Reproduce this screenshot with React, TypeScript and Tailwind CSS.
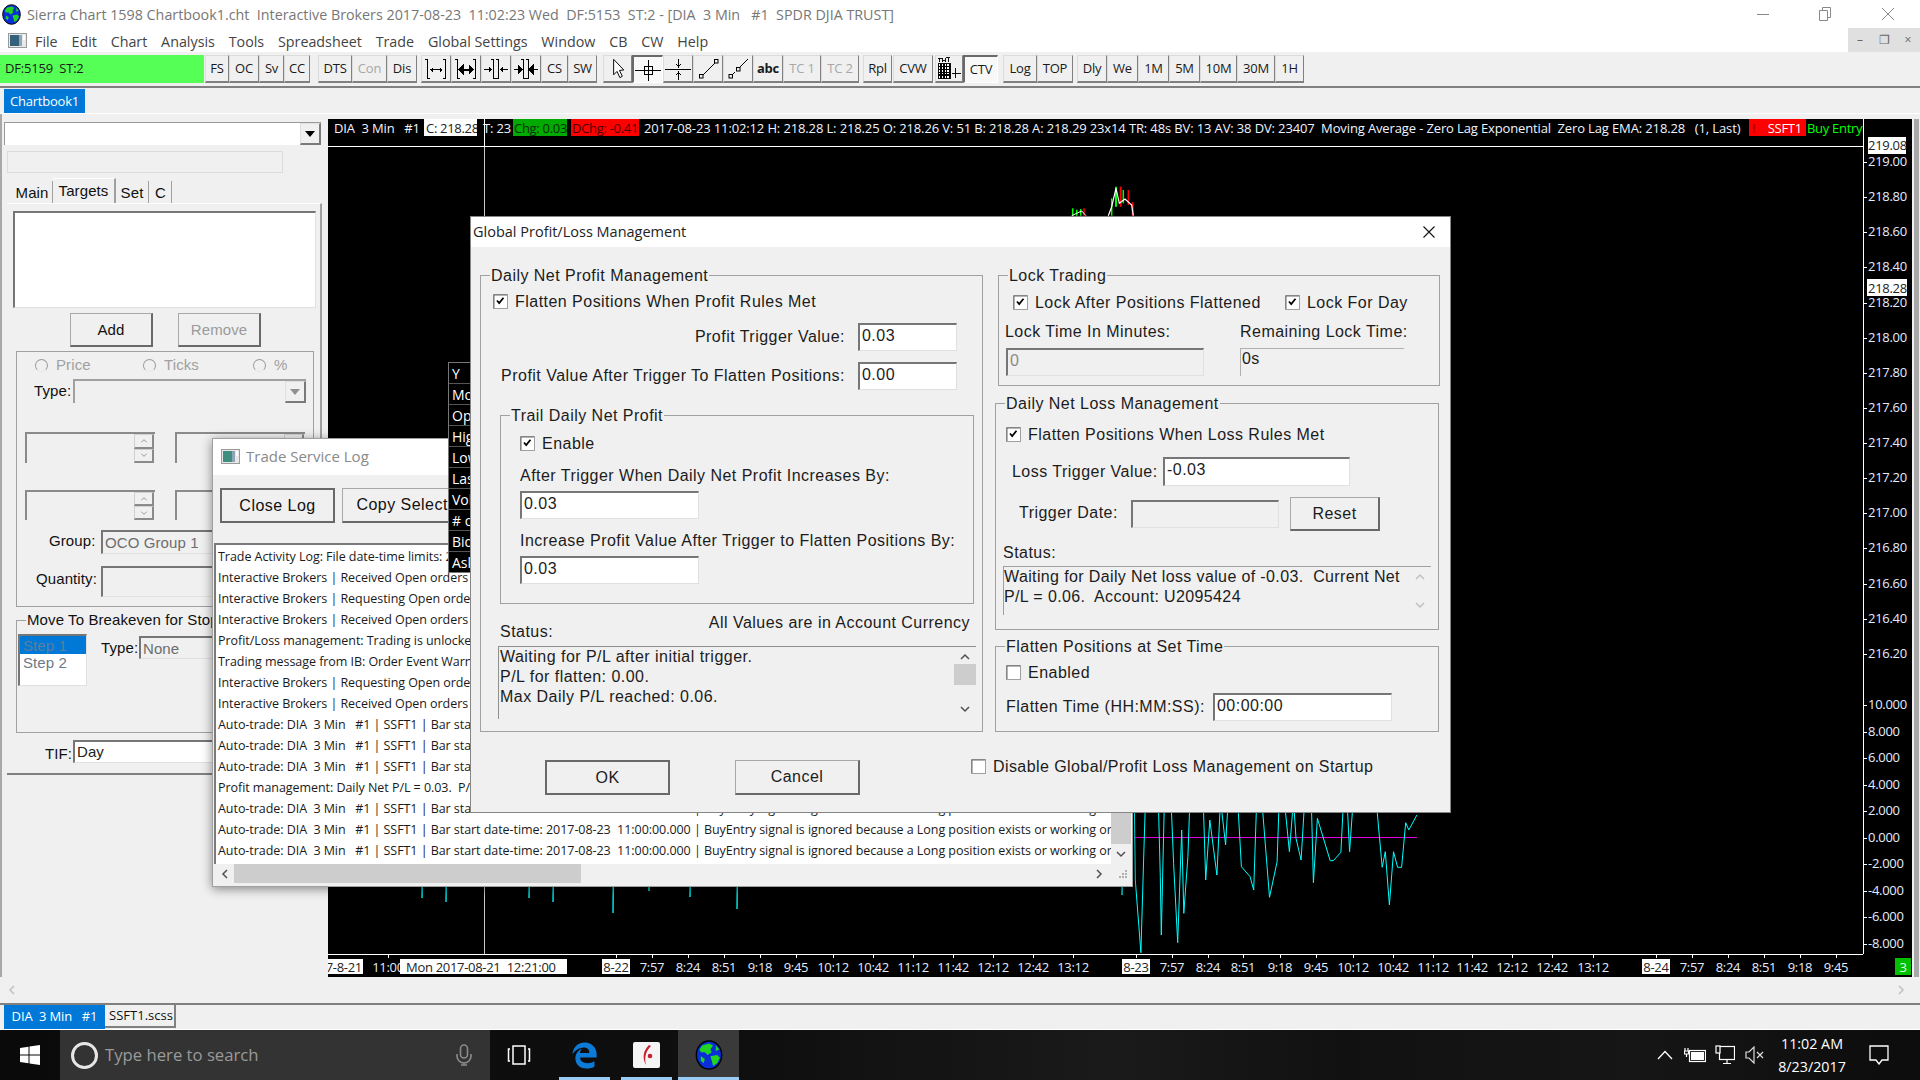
import React from "react";
import { FaEdgeLegacy } from "react-icons/fa";

const ui = "font-['Open_Sans',sans-serif]";
const ms = "font-['Liberation_Sans',Arial,sans-serif] text-[16px] tracking-[0.47px]";
const lp = "font-['Liberation_Sans',Arial,sans-serif] text-[15px] tracking-[0.1px]";

const Chev = ({ d, c = "#606060", s = 12 }: { d: "u" | "d" | "l" | "r"; c?: string; s?: number }) => {
  const p = { u: "2,8 6,4 10,8", d: "2,4 6,8 10,4", l: "8,2 4,6 8,10", r: "4,2 8,6 4,10" }[d];
  return (
    <svg width={s} height={s} viewBox="0 0 12 12" className="shrink-0">
      <polyline points={p} fill="none" stroke={c} strokeWidth="1.5" />
    </svg>
  );
};

const Globe = ({ w, h }: { w: number; h: number }) => (
  <svg width={w} height={h} viewBox="0 0 20 22" className="shrink-0">
    <ellipse cx="10" cy="11" rx="9.3" ry="10.3" fill="#0a2fd8" stroke="#000" strokeWidth="1" />
    <path d="M5 4 L10 2.5 L13 4 L11 7 L12 9 L9 11 L7 9 L4 9 L3 7 Z" fill="#22d422" />
    <path d="M11 12 L16 11 L18 13 L16 17 L13 19 L12 15 Z" fill="#22d422" />
    <path d="M15 4 L17.5 7 L15 8 Z" fill="#22d422" />
    <path d="M4 12 L7 14 L6 17 L4 15 Z" fill="#22d422" />
  </svg>
);

const DocIcon = ({ muted }: { muted?: boolean }) => (
  <svg width="19" height="15" viewBox="0 0 19 15" className="shrink-0">
    <rect x="0.5" y="0.5" width="18" height="14" fill="#e8e8e8" stroke="#9a9a9a" />
    <rect x="2" y="2" width="9" height="11" fill={muted ? "#3f8f80" : "#33607a"} />
    <rect x="11" y="2" width="3" height="11" fill="#8fa5b5" />
    <rect x="15" y="2" width="2" height="5" fill="#fff" />
  </svg>
);

const I = ({ children }: { children: React.ReactNode }) => (
  <svg width="28" height="26" viewBox="0 0 28 26" fill="none" stroke="#000" strokeWidth="1" shapeRendering="crispEdges">
    {children}
  </svg>
);

const Bars = ({ a, b }: { a: number; b: number }) => (
  <>
    <path d={`M${a}.5 3V23M${b}.5 3V23M${a - 2} 3.5H${a + 1}M${a} 22.5H${a + 3}M${b - 2} 3.5H${b + 1}M${b - 2} 22.5H${b + 1}`} />
  </>
);

const icons: Record<string, React.ReactNode> = {
  i1: (
    <I>
      <Bars a={5} b={23} />
      <path d="M8 13.5H20M10 11.5V15.5M9 12.5V14.5M18 11.5V15.5M19 12.5V14.5" />
    </I>
  ),
  i2: (
    <I>
      <Bars a={5} b={23} />
      <path d="M7 13.5H21" strokeWidth="2" />
      <path d="M7 13.5L11 9.5V17.5ZM21 13.5L17 9.5V17.5Z" fill="#000" />
    </I>
  ),
  i3: (
    <I>
      <Bars a={11} b={16} />
      <path d="M2 13.5H9M7 11.5L9 13.5L7 15.5M19 13.5H26M21 11.5L19 13.5L21 15.5" />
    </I>
  ),
  i4: (
    <I>
      <Bars a={11} b={16} />
      <path d="M2 13.5H6M19 13.5H26" />
      <path d="M10 13.5L6 9.5V17.5ZM17 13.5L21 9.5V17.5Z" fill="#000" />
    </I>
  ),
  arrow: (
    <svg width="28" height="26" viewBox="0 0 28 26" fill="#fff" stroke="#000">
      <path d="M10 3 V19 L13.5 15.5 L16.5 22 L19 20.5 L16 14.5 L20.5 14 Z" />
    </svg>
  ),
  cross: (
    <I>
      <path d="M1 13.5H27M14.5 3V24" />
      <rect x="10.5" y="9.5" width="8" height="8" />
    </I>
  ),
  mid: (
    <I>
      <path d="M1 13.5H27M14.5 3V10M12.5 8L14.5 11L16.5 8M14.5 17V24M12.5 19L14.5 16L16.5 19" />
    </I>
  ),
  l1: (
    <svg width="28" height="26" viewBox="0 0 28 26" fill="none" stroke="#000">
      <path d="M9 19L21 7" />
      <rect x="5.5" y="18.5" width="3.5" height="3.5" />
      <rect x="20.5" y="3.5" width="3.5" height="3.5" />
    </svg>
  ),
  l2: (
    <svg width="28" height="26" viewBox="0 0 28 26" fill="none" stroke="#000">
      <path d="M8 19L11 16M16 11L24 3" />
      <rect x="5" y="18.5" width="3.5" height="3.5" />
      <rect x="12.5" y="11.5" width="3.5" height="3.5" />
    </svg>
  ),
  grid: (
    <svg width="28" height="26" viewBox="0 0 28 26" fill="none" stroke="#000" shapeRendering="crispEdges">
      <path d="M2 1.5H6M4 1V5M7 1V5L8.5 3.5L10 5V1M11 1H15M13 1V5" />
      <rect x="2.5" y="7.5" width="13" height="16" fill="#fff" />
      <path d="M2 10.5H16M2 13.5H16M2 16.5H16M2 19.5H16M5.5 8V24M8.5 8V24M11.5 8V24M14.5 8V24" strokeWidth="1.4" />
      <path d="M17 17.5H27M21.5 12V23" />
    </svg>
  ),
};

type T = { t?: string; ic?: string; w: number; ml?: number; off?: boolean; on?: boolean; bold?: boolean };
const tools: T[] = [
  { t: "FS", w: 24, ml: 1 }, { t: "OC", w: 30 }, { t: "Sv", w: 25 }, { t: "CC", w: 26 },
  { t: "DTS", w: 34, ml: 8 }, { t: "Con", w: 35, off: true }, { t: "Dis", w: 30 },
  { ic: "i1", w: 30, ml: 4 }, { ic: "i2", w: 30 }, { ic: "i3", w: 30 }, { ic: "i4", w: 30 },
  { t: "CS", w: 27 }, { t: "SW", w: 29 },
  { ic: "arrow", w: 29, ml: 6 }, { ic: "cross", w: 31, on: true }, { ic: "mid", w: 30 }, { ic: "l1", w: 30 }, { ic: "l2", w: 30 },
  { t: "abc", w: 30, bold: true }, { t: "TC 1", w: 38, off: true }, { t: "TC 2", w: 38, off: true },
  { t: "Rpl", w: 29, ml: 4 }, { t: "CVW", w: 40, ml: 1 }, { ic: "grid", w: 28, ml: 2 }, { t: "CTV", w: 35, on: true },
  { t: "Log", w: 34, ml: 5 }, { t: "TOP", w: 36 }, { t: "Dly", w: 30, ml: 4 }, { t: "We", w: 31 }, { t: "1M", w: 31 },
  { t: "5M", w: 31 }, { t: "10M", w: 37 }, { t: "30M", w: 38 }, { t: "1H", w: 29 },
];

const menus = ["File", "Edit", "Chart", "Analysis", "Tools", "Spreadsheet", "Trade", "Global Settings", "Window", "CB", "CW", "Help"];

const Sunken = ({ className = "", children, white = true }: { className?: string; children?: React.ReactNode; white?: boolean }) => (
  <div
    className={`shrink-0 overflow-hidden whitespace-pre border-t-2 border-l-2 border-r border-b border-t-[#767676] border-l-[#767676] border-r-[#e0e0e0] border-b-[#e0e0e0] pl-[2px] leading-[22px] ${
      white ? "bg-white" : "bg-[#f0f0f0]"
    } ${className}`}
  >
    {children}
  </div>
);

const Btn = ({ className = "", children, def }: { className?: string; children: React.ReactNode; def?: boolean }) => (
  <div
    className={`flex shrink-0 items-center justify-center overflow-hidden whitespace-pre bg-[#f0f0f0] ${
      def
        ? "border-2 border-[#696969]"
        : "border-t border-l border-r-2 border-b-2 border-t-[#a8a8a8] border-l-[#a8a8a8] border-r-[#696969] border-b-[#696969]"
    } ${className}`}
  >
    {children}
  </div>
);

const Check = ({ on, label, className = "" }: { on?: boolean; label: string; className?: string }) => (
  <div className={`flex h-[16px] items-center whitespace-pre text-[#1c1c1c] ${className}`}>
    <svg width="15" height="15" viewBox="0 0 15 15" className="mr-[7px] shrink-0">
      <rect x="0.5" y="0.5" width="14" height="14" fill="#fff" stroke="#a0a0a0" />
      <path d="M1 1H14M1 1V14" stroke="#6a6a6a" strokeWidth="1" />
      {on && <path d="M4 6.5 L6.2 9 L10.5 3.8" fill="none" stroke="#000" strokeWidth="1.8" />}
    </svg>
    <span className="mt-[2px]">{label}</span>
  </div>
);

const Group = ({ legend, lx, className = "", children }: { legend: string; lx: number; className?: string; children: React.ReactNode }) => (
  <div className={`relative shrink-0 border border-[#a0a0a0] ${className}`}>
    <div
      className="absolute top-[-10px] h-[20px] whitespace-pre bg-[#f0f0f0] px-[1px] leading-[20px] text-[#1c1c1c]"
      style={{ left: lx }}
    >
      {legend}
    </div>
    {children}
  </div>
);

const Radio = ({ label, w, ml }: { label: string; w: number; ml: number }) => (
  <div className="flex h-[14px] items-center text-[#a0a0a0]" style={{ width: w, marginLeft: ml }}>
    <span className="mr-[8px] h-[13px] w-[13px] shrink-0 rounded-full border border-[#9a9a9a] border-b-[#e8e8e8] bg-[#f0f0f0]" />
    {label}
  </div>
);

const Spin = ({ h, w }: { h: number; w: number }) => (
  <div className="relative shrink-0 border-t-2 border-l-2 border-[#8a8a8a] bg-[#f0f0f0]" style={{ height: h, width: w }}>
    <div className="absolute right-[1px] top-0 flex h-full w-[20px] flex-col">
      <div className="flex flex-1 items-center justify-center border border-r-2 border-b-2 border-[#d0d0d0] border-r-[#8a8a8a] border-b-[#8a8a8a]">
        <Chev d="u" c="#9a9a9a" s={8} />
      </div>
      <div className="flex flex-1 items-center justify-center border border-r-2 border-b-2 border-[#d0d0d0] border-r-[#8a8a8a] border-b-[#8a8a8a]">
        <Chev d="d" c="#9a9a9a" s={8} />
      </div>
    </div>
  </div>
);

const DropBtn = ({ c = "#000" }: { c?: string }) => (
  <div className="flex h-full w-[21px] shrink-0 items-center justify-center border border-r-2 border-b-2 border-[#e0e0e0] border-r-[#7a7a7a] border-b-[#7a7a7a] bg-[#f0f0f0]">
    <svg width="10" height="6" viewBox="0 0 10 6">
      <path d="M0 0H10L5 6Z" fill={c} />
    </svg>
  </div>
);

const LeftPanel = () => (
  <div className={`flex w-[328px] shrink-0 flex-col border-l-2 border-[#a8a8a8] ${lp}`}>
    <div className="ml-[2px] mt-[8px] flex h-[23px] w-[317px] items-stretch justify-end border-t border-l border-[#9a9a9a] bg-white">
      <DropBtn />
    </div>
    <div className="ml-[5px] mt-[6px] h-[22px] w-[276px] border border-[#dcdcdc]" />
    <div className="ml-[10px] mt-[5px] flex h-[25px] items-end text-[#111]">
      <div className="flex h-[22px] w-[41px] items-center justify-center border-r border-[#a0a0a0] pt-[2px]">Main</div>
      <div className="flex h-[25px] w-[63px] items-center justify-center border-r-2 border-t border-[#a0a0a0] border-t-white">Targets</div>
      <div className="flex h-[22px] w-[33px] items-center justify-center border-r border-[#a0a0a0] pt-[2px]">Set</div>
      <div className="ml-[1px] flex h-[22px] w-[22px] items-center justify-center border-r border-[#a0a0a0] pt-[2px]">C</div>
    </div>
    <div className="ml-[5px] flex h-[572px] w-[315px] flex-col border-t border-white border-r-2 border-b-2 border-r-[#a0a0a0] border-b-[#808080]">
      <Sunken className="ml-[6px] mt-[7px] h-[97px] w-[303px]" />
      <div className="mt-[5px] flex h-[34px]">
        <Btn className="ml-[63px] h-[34px] w-[83px] pt-[1px] text-[#111]">Add</Btn>
        <Btn className="ml-[25px] h-[34px] w-[83px] pt-[1px] text-[#9a9a9a]">Remove</Btn>
      </div>
      <div className="ml-[9px] mt-[4px] h-[256px] w-[298px] shrink-0 border border-[#a0a0a0]">
        <div className="mt-[6px] flex">
          <Radio label="Price" w={108} ml={18} />
          <Radio label="Ticks" w={110} ml={0} />
          <Radio label="%" w={40} ml={0} />
        </div>
        <div className="mt-[7px] flex h-[24px] items-center">
          <span className="ml-[17px] w-[39px] text-[#111]">Type:</span>
          <div className="flex h-[24px] w-[233px] justify-end border-t-2 border-l-2 border-[#a0a0a0]">
            <DropBtn c="#909090" />
          </div>
        </div>
        <div className="ml-[8px] mt-[29px] flex gap-[20px]">
          <Spin h={31} w={130} />
          <Spin h={31} w={130} />
        </div>
        <div className="ml-[8px] mt-[27px] flex gap-[20px]">
          <Spin h={30} w={130} />
          <Spin h={30} w={130} />
        </div>
        <div className="mt-[10px] flex h-[24px] items-center">
          <span className="ml-[32px] w-[52px] pb-[2px] text-[#111]">Group:</span>
          <Sunken white={false} className="h-[24px] w-[190px] text-[#6d6d6d]">OCO Group 1</Sunken>
        </div>
        <div className="mt-[12px] flex h-[31px] items-center">
          <span className="ml-[19px] w-[65px] pb-[4px] text-[#111]">Quantity:</span>
          <Sunken white={false} className="h-[31px] w-[190px]" />
        </div>
      </div>
      <div className="relative ml-[9px] mt-[13px] h-[113px] w-[298px] shrink-0 border border-[#a0a0a0]">
        <div className="absolute left-[9px] top-[-11px] h-[20px] whitespace-pre bg-[#f0f0f0] px-[1px] leading-[20px] text-[#111]">
          Move To Breakeven for Stops
        </div>
        <div className="mt-[13px] flex">
          <Sunken className="ml-[1px] h-[52px] w-[69px] !pl-0 text-[#6d7a88]">
            <div className="h-[18px] bg-[#0078d7] pl-[3px] leading-[19px] text-[#5f7d9e]">Step 1</div>
            <div className="pl-[3px] leading-[18px]">Step 2</div>
          </Sunken>
          <span className="ml-[14px] mt-[3px] w-[38px] text-[#111]">Type:</span>
          <Sunken white={false} className="mt-[2px] h-[23px] w-[150px] text-[#6d6d6d]">None</Sunken>
        </div>
      </div>
      <div className="mt-[7px] flex h-[23px]">
        <span className="ml-[38px] mt-[3px] w-[28px] text-[#111]">TIF:</span>
        <Sunken className="h-[23px] w-[240px] !leading-[20px] text-[#222]">Day</Sunken>
      </div>
    </div>
  </div>
);

const PRICES: [string, number][] = [
  ["219.00", 162], ["218.80", 197], ["218.60", 232], ["218.40", 267], ["218.20", 303], ["218.00", 338], ["217.80", 373],
  ["217.60", 408], ["217.40", 443], ["217.20", 478], ["217.00", 513], ["216.80", 548], ["216.60", 584], ["216.40", 619],
  ["216.20", 654], ["10.000", 705], ["8.000", 732], ["6.000", 758], ["4.000", 785], ["2.000", 811], ["0.000", 838],
  ["-2.000", 864], ["-4.000", 891], ["-6.000", 917], ["-8.000", 944],
];

const TIMES: [string, number][] = [
  ["11:00", 388], ["7:57", 652], ["8:24", 688], ["8:51", 724], ["9:18", 760], ["9:45", 796], ["10:12", 833], ["10:42", 873],
  ["11:12", 913], ["11:42", 953], ["12:12", 993], ["12:42", 1033], ["13:12", 1073], ["7:57", 1172], ["8:24", 1208], ["8:51", 1243],
  ["9:18", 1280], ["9:45", 1316], ["10:12", 1353], ["10:42", 1393], ["11:12", 1433], ["11:42", 1472], ["12:12", 1512], ["12:42", 1552],
  ["13:12", 1593], ["7:57", 1692], ["8:24", 1728], ["8:51", 1764], ["9:18", 1800], ["9:45", 1836],
];

const cy: [number, number][] = [
  [28, 60], [30, 300], [37, 440], [41, 518], [47, 200], [50, 60], [75, 60], [79, 290], [81, 465], [87, 60], [100, 60], [105, 250], [113, 488],
  [121, 150], [125, 400], [133, 230], [137, 60], [163, 60], [168, 300], [176, 120], [190, 285], [197, 60], [207, 195], [212, 60], [225, 60],
  [232, 100], [238, 260], [255, 290], [262, 330], [268, 60], [278, 60], [293, 352], [308, 245], [312, 60], [322, 60], [332, 215], [340, 60],
  [345, 175], [355, 240], [362, 60], [375, 60], [379, 308], [387, 115], [412, 242], [418, 242], [433, 217], [438, 60], [445, 60], [450, 215],
  [457, 60], [502, 60], [514, 262], [520, 215], [528, 375], [536, 215], [544, 262], [552, 262], [560, 128], [566, 150], [582, 105],
];
const cyPts = cy.map(([X, Y]) => `${(1120 + X / 1.96 - 328).toFixed(1)},${(780 + Y / 3 - 147).toFixed(1)}`).join(" ");
const stubs: [number, number][] = [[422, 898], [446, 902], [529, 898], [553, 902], [613, 913], [649, 891], [690, 897], [737, 909], [1122, 895]];
const b = (X: number, Y: number) => `${(X / 3 + 732).toFixed(1)},${(Y / 3 + 28).toFixed(1)}`;

const Plot = () => (
  <svg width="1535" height="807" className="block">
    <line x1="156.5" y1="0" x2="156.5" y2="807" stroke="#c8c8c8" />
    {[[38, 100, 122], [50, 104, 122], [62, 102, 122], [72, 100, 122]].map(([X, a, c], i) => (
      <polyline key={i} points={`${b(X, a)} ${b(X, c)}`} stroke={i === 3 ? "#ff0000" : "#00ff00"} strokeWidth="1.5" />
    ))}
    <polyline points={`${b(168, 35)} ${b(168, 95)}`} stroke="#00ff00" strokeWidth="2" />
    <polyline points={`${b(155, 70)} ${b(155, 122)}`} stroke="#00ff00" strokeWidth="1.5" />
    <polyline points={`${b(190, 45)} ${b(190, 85)}`} stroke="#00ff00" strokeWidth="1.5" />
    <polyline points={`${b(182, 35)} ${b(182, 95)}`} stroke="#ff0000" strokeWidth="2" />
    <polyline points={`${b(205, 45)} ${b(205, 90)}`} stroke="#ff0000" strokeWidth="1.5" />
    <polyline points={`${b(218, 82)} ${b(218, 122)}`} stroke="#ff0000" strokeWidth="2" />
    <polyline
      points={`${b(35, 122)} ${b(50, 115)} ${b(65, 108)} ${b(78, 122)}`}
      fill="none" stroke="#fff" strokeWidth="1"
    />
    <polyline
      points={`${b(145, 122)} ${b(155, 95)} ${b(168, 40)} ${b(178, 85)} ${b(195, 72)} ${b(215, 90)} ${b(220, 122)}`}
      fill="none" stroke="#fff" strokeWidth="1.2"
    />
    <line x1="806" y1="690.5" x2="1089" y2="690.5" stroke="#e000e0" strokeWidth="1" />
    <polyline points={cyPts} fill="none" stroke="#00ffff" strokeWidth="1" />
    {stubs.map(([x, y], i) => (
      <polyline key={i} points={`${x - 328},720 ${x - 328},${y - 147} ${x - 327},720`} fill="none" stroke="#00e0e0" strokeWidth="1" />
    ))}
  </svg>
);

const PriceAxis = () => (
  <svg width="49" height="835" className={`block ${ui} text-[13px] tracking-[-0.3px]`}>
    <line x1="0.5" y1="0" x2="0.5" y2="835" stroke="#fff" />
    {PRICES.map(([t, y]) => (
      <g key={t}>
        <line x1="1" x2="4" y1={y - 119 + 0.5} y2={y - 119 + 0.5} stroke="#fff" />
        <text x="5" y={y - 119 + 4} fill="#e4ecff">{t}</text>
      </g>
    ))}
    <rect x="5" y="18" width="38" height="17" fill="#fff" />
    <text x="5" y="31" fill="#222">219.08</text>
    <rect x="4" y="160" width="40" height="17" fill="#fff" />
    <text x="5" y="174" fill="#222">218.28</text>
  </svg>
);

const TimeAxis = () => (
  <svg width="1584" height="23" className={`block ${ui} text-[13px] tracking-[-0.3px]`}>
    <line x1="0" x2="1535" y1="0.5" y2="0.5" stroke="#fff" />
    {[...TIMES.map((t) => t[1]), 602 + 14, 1136, 1656].map((x, i) => (
      <line key={i} x1={x - 328 + 0.5} x2={x - 328 + 0.5} y1="0" y2="4" stroke="#fff" />
    ))}
    {TIMES.map(([t, x], i) => (
      <text key={i} x={x - 328} y="17.5" textAnchor="middle" fill="#e4ecff">{t}</text>
    ))}
    <rect x="0" y="5" width="35" height="15" fill="#fff" />
    <text x="34" y="17.5" textAnchor="end" fill="#222">17-8-21</text>
    <rect x="72" y="5" width="167" height="15" fill="#fff" />
    <text x="78" y="17.5" fill="#222" xmlSpace="preserve">Mon 2017-08-21  12:21:00</text>
    {[["8-22", 274], ["8-23", 794], ["8-24", 1314]].map(([t, x]) => (
      <g key={t as string}>
        <rect x={x as number} y="5" width="28" height="15" fill="#fff" />
        <text x={(x as number) + 14} y="17.5" textAnchor="middle" fill="#222">{t}</text>
      </g>
    ))}
    <rect x="1567" y="4" width="16" height="17" fill="#00c000" />
    <text x="1575" y="18" textAnchor="middle" fill="#e0ffe0">3</text>
  </svg>
);

const ChartHeader = () => (
  <div className={`flex h-[28px] w-[1535px] items-start overflow-hidden whitespace-pre border-b border-white ${ui} text-[13px] leading-[18px] tracking-[-0.13px] text-[#f0f4ff]`}>
    <span className="ml-[6px] w-[90px] shrink-0">DIA  3 Min   #1</span>
    <span className="h-[17px] w-[53px] shrink-0 overflow-hidden bg-white pl-[2px] leading-[19px] tracking-[-0.3px] text-[#222]">C: 218.28</span>
    <span className="ml-[6px] w-[30px] shrink-0">T: 23</span>
    <span className="h-[17px] w-[54px] shrink-0 overflow-hidden bg-[#00aa00] pl-[1px] leading-[19px] tracking-[-0.3px] text-[#0a2a0a]">Chg: 0.03</span>
    <span className="ml-[4px] h-[17px] w-[68px] shrink-0 overflow-hidden bg-[#ff0000] pl-[1px] leading-[19px] tracking-[-0.3px] text-[#4a0000]">DChg: -0.41</span>
    <span className="ml-[5px] w-[1105px] shrink-0">2017-08-23 11:02:12 H: 218.28 L: 218.25 O: 218.26 V: 51 B: 218.28 A: 218.29 23x14 TR: 48s BV: 13 AV: 38 DV: 23407  Moving Average - Zero Lag Exponential  Zero Lag EMA: 218.28   (1, Last)</span>
    <span className="h-[17px] w-[57px] shrink-0 overflow-hidden bg-[#ff0000] pl-[3px] leading-[19px] tracking-[-0.3px] text-white"><span className="font-bold text-[#b00000]">!</span>    SSFT1</span>
    <span className="ml-[1px] shrink-0 tracking-[-0.3px] text-[#00ff00]">Buy Entry: 0</span>
  </div>
);

const LOG_LINES = [
  "Trade Activity Log: File date-time limits: 2017-08-23 00:00:00 to 2017-08-23 23:59:59",
  "Interactive Brokers | Received Open orders data",
  "Interactive Brokers | Requesting Open orders data",
  "Interactive Brokers | Received Open orders data",
  "Profit/Loss management: Trading is unlocked",
  "Trading message from IB: Order Event Warning",
  "Interactive Brokers | Requesting Open orders data",
  "Interactive Brokers | Received Open orders data",
  "Auto-trade: DIA  3 Min   #1 | SSFT1 | Bar start date-time: 2017-08-23  11:00:00.000",
  "Auto-trade: DIA  3 Min   #1 | SSFT1 | Bar start date-time: 2017-08-23  11:00:00.000",
  "Auto-trade: DIA  3 Min   #1 | SSFT1 | Bar start date-time: 2017-08-23  11:00:00.000",
  "Profit management: Daily Net P/L = 0.03.  P/L for flatten: 0.00",
  "Auto-trade: DIA  3 Min   #1 | SSFT1 | Bar start date-time: 2017-08-23  11:00:00.000 | BuyEntry signal is ignored because a Long position exists or working order",
  "Auto-trade: DIA  3 Min   #1 | SSFT1 | Bar start date-time: 2017-08-23  11:00:00.000 | BuyEntry signal is ignored because a Long position exists or working order",
  "Auto-trade: DIA  3 Min   #1 | SSFT1 | Bar start date-time: 2017-08-23  11:00:00.000 | BuyEntry signal is ignored because a Long position exists or working order",
];

const TradeLog = () => (
  <div className="absolute left-[212px] top-[438px] flex h-[449px] w-[921px] flex-col border border-[#a0a0a0] bg-[#f0f0f0] shadow-[0_2px_10px_rgba(0,0,0,0.45)]">
    <div className="flex h-[36px] shrink-0 items-center bg-white pb-[2px] pl-[8px]">
      <DocIcon muted />
      <span className={`ml-[6px] text-[15px] text-[#8a8a8a] ${ui}`}>Trade Service Log</span>
    </div>
    <div className={`mt-[13px] flex gap-[7px] ${ms} text-[#111]`}>
      <Btn def className="ml-[7px] h-[35px] w-[115px]">Close Log</Btn>
      <Btn className="h-[35px] w-[140px]">Copy Selected</Btn>
    </div>
    <div className="ml-[1px] mt-[20px] flex h-[321px] shrink-0 border-t-2 border-l-2 border-[#7a7a7a]">
      <div className={`w-[895px] overflow-hidden whitespace-pre bg-white pl-[2px] pt-[1px] ${ui} text-[12.5px] leading-[21px] tracking-[-0.05px] text-[#1a1a1a]`}>
        {LOG_LINES.map((l, i) => (
          <div key={i}>{l}</div>
        ))}
      </div>
      <div className="flex w-[20px] flex-col items-center justify-end bg-[#f0f0f0]">
        <div className="h-[60px] w-full bg-[#cdcdcd]" />
        <div className="flex h-[20px] items-center"><Chev d="d" c="#505050" /></div>
      </div>
    </div>
    <div className="flex h-[19px] shrink-0 items-center pl-[6px]">
      <Chev d="l" c="#505050" />
      <div className="ml-[3px] h-full w-[347px] bg-[#cdcdcd]" />
      <div className="ml-[512px] flex"><Chev d="r" c="#505050" /></div>
      <svg width="12" height="12" viewBox="0 0 12 12" className="ml-[12px]">
        <path d="M8 2h2v2H8zM8 5h2v2H8zM5 5h2v2H5zM8 8h2v2H8zM5 8h2v2H5zM2 8h2v2H2z" fill="#b0b0b0" />
      </svg>
    </div>
  </div>
);

const ValuesPanel = () => (
  <div className={`absolute left-[448px] top-[362px] h-[211px] w-[60px] overflow-hidden border border-[#777] bg-black ${ui} text-[14px] text-white`}>
    {["Y", "Mo", "Open", "High", "Low", "Last", "Vol", "# of", "Bid", "Ask"].map((t) => (
      <div key={t} className="h-[21px] border-b border-[#555] pl-[3px] leading-[21px]">{t}</div>
    ))}
  </div>
);

const ScrollBar = ({ disabled, thumb }: { disabled?: boolean; thumb?: boolean }) => (
  <div className="flex w-[22px] shrink-0 flex-col items-center justify-between bg-[#f0f0f0] py-[4px]">
    <Chev d="u" c={disabled ? "#c0c0c0" : "#505050"} />
    {thumb && <div className="mb-[4px] mt-[-14px] h-[21px] w-full bg-[#cdcdcd]" />}
    <Chev d="d" c={disabled ? "#c0c0c0" : "#505050"} />
  </div>
);

const Dialog = () => (
  <div className={`absolute left-[470px] top-[216px] flex h-[597px] w-[981px] flex-col border border-[#868686] bg-[#f0f0f0] ${ms} text-[#1c1c1c]`}>
    <div className="flex h-[30px] shrink-0 items-center justify-between bg-white pl-[2px] pr-[14px]">
      <span className={`${ui} text-[14.5px] tracking-normal text-[#222]`}>Global Profit/Loss Management</span>
      <svg width="14" height="14" viewBox="0 0 14 14">
        <path d="M1.5 1.5L12.5 12.5M12.5 1.5L1.5 12.5" stroke="#111" strokeWidth="1.1" />
      </svg>
    </div>
    <div className="mt-[28px] flex h-[457px] shrink-0 pl-[9px]">
      <Group legend="Daily Net Profit Management" lx={9} className="h-[457px] w-[503px]">
        <Check on label="Flatten Positions When Profit Rules Met" className="ml-[12px] mt-[17px]" />
        <div className="mr-[25px] mt-[14px] flex h-[28px] items-center justify-end gap-[13px]">
          <span>Profit Trigger Value:</span>
          <Sunken className="h-[28px] w-[99px]">0.03</Sunken>
        </div>
        <div className="mr-[25px] mt-[11px] flex h-[28px] items-center justify-end gap-[13px]">
          <span>Profit Value After Trigger To Flatten Positions:</span>
          <Sunken className="h-[28px] w-[99px]">0.00</Sunken>
        </div>
        <Group legend="Trail Daily Net Profit" lx={9} className="ml-[19px] mt-[25px] h-[189px] w-[474px]">
          <Check on label="Enable" className="ml-[19px] mt-[19px]" />
          <div className="ml-[19px] mt-[15px] h-[20px] whitespace-pre leading-[20px]">After Trigger When Daily Net Profit Increases By:</div>
          <Sunken className="ml-[19px] mt-[5px] h-[28px] w-[179px]">0.03</Sunken>
          <div className="ml-[19px] mt-[12px] h-[20px] whitespace-pre leading-[20px]">Increase Profit Value After Trigger to Flatten Positions By:</div>
          <Sunken className="ml-[19px] mt-[5px] h-[28px] w-[179px]">0.03</Sunken>
        </Group>
        <div className="ml-[19px] mr-[12px] mt-[8px] flex h-[28px] justify-between">
          <span className="mb-[-2px] self-end leading-[20px]">Status:</span>
          <span className="mt-[1px] self-start leading-[20px]">All Values are in Account Currency</span>
        </div>
        <div className="ml-[17px] mt-[6px] flex h-[73px] w-[478px] border-t border-l border-[#909090] border-r-[#fff]">
          <div className="flex-1 whitespace-pre bg-[#f0f0f0] pl-px leading-[20px]">
            {"Waiting for P/L after initial trigger.\nP/L for flatten: 0.00.\nMax Daily P/L reached: 0.06."}
          </div>
          <ScrollBar thumb />
        </div>
      </Group>
      <div className="ml-[12px] flex w-[445px] shrink-0 flex-col">
        <Group legend="Lock Trading" lx={9} className="ml-[3px] h-[111px] w-[442px]">
          <div className="ml-[14px] mt-[18px] flex">
            <Check on label="Lock After Positions Flattened" className="w-[272px]" />
            <Check on label="Lock For Day" />
          </div>
          <div className="ml-[6px] mt-[12px] flex h-[20px] leading-[20px]">
            <span className="w-[235px]">Lock Time In Minutes:</span>
            <span>Remaining Lock Time:</span>
          </div>
          <div className="ml-[7px] mt-[6px] flex gap-[36px]">
            <Sunken white={false} className="h-[28px] w-[198px] text-[#8a8a8a]">0</Sunken>
            <div className="h-[28px] w-[164px] border-t border-l border-[#b0b0b0] pl-[1px] leading-[20px]">0s</div>
          </div>
        </Group>
        <Group legend="Daily Net Loss Management" lx={9} className="mt-[17px] h-[227px] w-[444px]">
          <Check on label="Flatten Positions When Loss Rules Met" className="ml-[10px] mt-[22px]" />
          <div className="ml-[16px] mt-[15px] flex h-[29px] items-center">
            <span className="w-[151px]">Loss Trigger Value:</span>
            <Sunken className="h-[29px] w-[187px]">-0.03</Sunken>
          </div>
          <div className="ml-[23px] mt-[11px] flex h-[34px] items-center">
            <span className="w-[112px] pb-[2px]">Trigger Date:</span>
            <Sunken white={false} className="h-[28px] w-[148px]" />
            <Btn className="ml-[11px] h-[34px] w-[90px]">Reset</Btn>
          </div>
          <div className="ml-[7px] mt-[12px] h-[20px] leading-[20px]">Status:</div>
          <div className="ml-[7px] mt-[3px] flex h-[49px] w-[428px] border-t border-l border-[#a0a0a0]">
            <div className="flex-1 whitespace-pre leading-[20px] tracking-[0.37px]">
              {"Waiting for Daily Net loss value of -0.03.  Current Net\nP/L = 0.06.  Account: U2095424"}
            </div>
            <ScrollBar disabled />
          </div>
        </Group>
        <Group legend="Flatten Positions at Set Time" lx={9} className="mt-[16px] h-[86px] w-[444px]">
          <Check label="Enabled" className="ml-[10px] mt-[17px]" />
          <div className="ml-[10px] mt-[13px] flex h-[28px] items-center">
            <span className="w-[207px]">Flatten Time (HH:MM:SS):</span>
            <Sunken className="h-[28px] w-[179px]">00:00:00</Sunken>
          </div>
        </Group>
      </div>
    </div>
    <div className="mt-[28px] flex items-start pl-[74px]">
      <Btn def className="h-[35px] w-[125px]">OK</Btn>
      <Btn className="ml-[65px] h-[35px] w-[125px]">Cancel</Btn>
      <Check label="Disable Global/Profit Loss Management on Startup" className="ml-[111px] mt-[-2px] tracking-[0.42px]" />
    </div>
  </div>
);

const Taskbar = () => (
  <div className={`flex h-[51px] shrink-0 border-t border-white bg-[linear-gradient(90deg,#0a0a0a_0%,#0f0f0f_40%,#1a1a1a_58%,#111_70%,#161616_85%,#0c0c0c_100%)] ${ui}`}>
    <div className="flex w-[60px] items-center justify-center">
      <svg width="20" height="20" viewBox="0 0 20 20" fill="#fff">
        <path d="M0 3L8.5 1.7V9.4H0ZM9.5 1.5L20 0V9.4H9.5ZM0 10.4H8.5V18.2L0 17ZM9.5 10.4H20V20L9.5 18.4Z" />
      </svg>
    </div>
    <div className="flex w-[430px] items-center bg-[#333333] pl-[11px]">
      <span className="h-[27px] w-[27px] rounded-full border-[3px] border-[#e6e6e6]" />
      <span className="ml-[7px] text-[16.7px] text-[#9a9a9a]">Type here to search</span>
      <svg width="16" height="22" viewBox="0 0 16 22" fill="none" stroke="#8a8a8a" strokeWidth="1.6" className="ml-auto mr-[18px]">
        <rect x="4.5" y="1" width="7" height="13" rx="3.5" />
        <path d="M1 10v2a7 7 0 0 0 14 0v-2M8 19v2M5 21h6" />
      </svg>
    </div>
    <div className="flex w-[69px] items-center justify-center pr-[11px]">
      <svg width="24" height="20" viewBox="0 0 24 20" fill="none" stroke="#fff" strokeWidth="1.5">
        <rect x="6" y="1" width="12" height="18" />
        <path d="M3 4H1.5V16H3M21 4H22.5V16H21" />
      </svg>
    </div>
    <div className="flex w-[51px] flex-col items-center justify-between">
      <FaEdgeLegacy className="mt-[12px] text-[#0c7bd8]" size={27} />
      <div className="h-[3px] w-full bg-[#99ccf5]" />
    </div>
    <div className="ml-[11px] flex w-[51px] flex-col items-center justify-between">
      <svg width="27" height="26" viewBox="0 0 27 26" className="mt-[12px]">
        <rect x="0" y="0" width="27" height="26" rx="2" fill="#f4f4f4" />
        <path d="M16 3 C10 9 9 16 13 23 C11 15 13 9 18 4 Z" fill="#c81e2e" />
        <circle cx="17" cy="14" r="2.3" fill="#c81e2e" />
      </svg>
      <div className="h-[3px] w-full bg-[#99ccf5]" />
    </div>
    <div className="ml-[6px] flex w-[61px] flex-col items-center justify-between bg-[#3a3a3a]">
      <div className="mt-[10px]"><Globe w={30} h={30} /></div>
      <div className="h-[3px] w-full bg-[#99ccf5]" />
    </div>
    <div className="ml-auto flex items-center pr-[16px] text-white">
      <div className="flex w-[30px] justify-center">
        <svg width="16" height="10" viewBox="0 0 16 10" fill="none" stroke="#fff" strokeWidth="1.3"><path d="M1 9L8 1.5L15 9" /></svg>
      </div>
      <div className="flex w-[30px] justify-center">
        <svg width="22" height="18" viewBox="0 0 22 18" fill="none" stroke="#fff" strokeWidth="1.2">
          <rect x="5.5" y="4.5" width="16" height="11" />
          <rect x="7" y="6" width="13" height="8" fill="#fff" stroke="none" />
          <path d="M1 2V5M4 2V5M0.5 5H4.5V8H0.5ZM2.5 8V11" />
        </svg>
      </div>
      <div className="flex w-[30px] justify-center">
        <svg width="20" height="20" viewBox="0 0 20 20" fill="none" stroke="#fff" strokeWidth="1.2">
          <rect x="4.5" y="1.5" width="15" height="13" />
          <rect x="1" y="1" width="4" height="7" fill="#111" />
          <path d="M12 15V18M8 18.5H16" />
        </svg>
      </div>
      <div className="flex w-[30px] justify-center">
        <svg width="20" height="18" viewBox="0 0 20 18" fill="none" stroke="#ddd" strokeWidth="1.2">
          <path d="M1 6H4L9 1V17L4 12H1Z" />
          <path d="M12 6L18 12M18 6L12 12" />
        </svg>
      </div>
      <div className="flex w-[84px] flex-col items-center gap-[3px] text-[14.3px] leading-[20px]">
        <span className="h-[20px]">11:02 AM</span>
        <span className="h-[20px]">8/23/2017</span>
      </div>
      <div className="flex w-[50px] justify-center">
        <svg width="20" height="20" viewBox="0 0 20 20" fill="none" stroke="#fff" strokeWidth="1.3">
          <path d="M1 1H19V15H13L10 19L7 15H1Z" />
        </svg>
      </div>
    </div>
  </div>
);

export default function App() {
  return (
    <div className={`relative flex h-[1080px] w-[1920px] flex-col overflow-hidden bg-[#f0f0f0] ${ui}`}>
      <div className="flex h-[28px] shrink-0 items-center bg-white pl-[2px]">
        <Globe w={19} h={21} />
        <span className="ml-[6px] mt-[1px] whitespace-pre text-[14.3px] text-[#777]">
          Sierra Chart 1598 Chartbook1.cht  Interactive Brokers 2017-08-23  11:02:23 Wed  DF:5153  ST:2 - [DIA  3 Min   #1  SPDR DJIA TRUST]
        </span>
        <div className="ml-auto flex items-center">
          <div className="mr-[50px] h-px w-[12px] bg-[#888]" />
          <svg width="12" height="14" viewBox="0 0 12 14" fill="none" stroke="#888" className="mr-[50px]">
            <path d="M0.5 3.5H8.5V13.5H0.5ZM3.5 3.5V0.5H11.5V10.5H8.5" />
          </svg>
          <svg width="14" height="14" viewBox="0 0 14 14" className="mr-[25px]">
            <path d="M1 1L13 13M13 1L1 13" stroke="#888" />
          </svg>
        </div>
      </div>
      <div className="flex h-[24px] shrink-0 items-center bg-white pl-[8px] text-[14.3px] text-[#444]">
        <DocIcon />
        <div className="ml-[8px] mt-[3px] flex gap-[13.8px]">
          {menus.map((m) => (
            <span key={m}>{m}</span>
          ))}
        </div>
        <div className="ml-auto flex h-full">
          {["–", "❐", "×"].map((t) => (
            <div key={t} className="flex w-[24px] items-center justify-center bg-[#e0e0e0] text-[12px] text-[#666]">{t}</div>
          ))}
        </div>
      </div>
      <div className="flex h-[34px] shrink-0 pt-[3px] text-[13px] tracking-[-0.2px] text-[#1a1a1a]">
        <div className="flex h-[28px] w-[204px] shrink-0 items-center whitespace-pre bg-[#55ff55] pl-[5px]">DF:5159  ST:2</div>
        {tools.map((x, i) => (
          <div
            key={i}
            className={`flex h-[28px] shrink-0 items-center justify-center overflow-hidden ${
              x.on
                ? "border-t-2 border-l-2 border-b border-r border-t-[#696969] border-l-[#696969] border-r-white border-b-white bg-[#f8f8f8]"
                : "border-t border-l border-r border-b-2 border-t-[#dcdcdc] border-l-[#dcdcdc] border-r-[#808080] border-b-[#808080]"
            } ${x.off ? "text-[#a8a8a8]" : ""} ${x.bold ? "font-bold" : ""}`}
            style={{ width: x.w, marginLeft: x.ml ?? 0 }}
          >
            {x.ic ? icons[x.ic] : x.t}
          </div>
        ))}
      </div>
      <div className="h-[2px] shrink-0 bg-[#808080]" />
      <div className="h-[26px] shrink-0 border-b border-white pl-[4px] pt-[1px]">
        <div className="flex h-[24px] w-[81px] items-center justify-center bg-[#0078d7] pt-[1px] text-[13px] tracking-[-0.2px] text-white">Chartbook1</div>
      </div>
      <div className="flex h-[863px] shrink-0">
        <LeftPanel />
        <div className="mt-[5px] flex h-[858px] w-[1584px] shrink-0 flex-col bg-black">
          <div className="flex h-[835px] shrink-0">
            <div className="w-[1535px] shrink-0">
              <ChartHeader />
              <Plot />
            </div>
            <PriceAxis />
          </div>
          <TimeAxis />
        </div>
        <div className="ml-[2px] mt-[5px] w-[5px] bg-[#a8a8a8]" />
      </div>
      <div className="flex h-[26px] shrink-0 items-center justify-between pl-[6px] pr-[13px]">
        <Chev d="l" c="#c0c0c0" />
        <Chev d="r" c="#c0c0c0" />
      </div>
      <div className="flex h-[26px] shrink-0 items-start border-t-2 border-[#808080] pl-[4px] text-[13px] tracking-[-0.13px]">
        <div className="flex h-[24px] w-[101px] items-center justify-center whitespace-pre bg-[#0078d7] text-white">DIA  3 Min   #1</div>
        <div className="flex h-[23px] w-[71px] items-center justify-center border-r-2 border-b-2 border-[#808080] pl-[3px] tracking-[0px] text-[#111]">SSFT1.scss</div>
      </div>
      <Taskbar />
      <TradeLog />
      <ValuesPanel />
      <div className="absolute left-[484px] top-[119px] h-[28px] w-px bg-white" />
      <Dialog />
    </div>
  );
}
